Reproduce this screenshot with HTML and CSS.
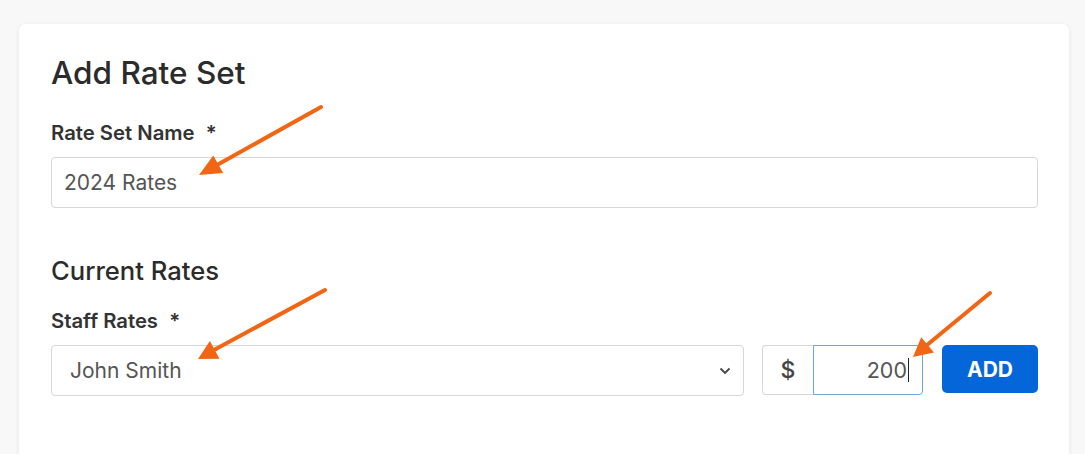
FILE: index.html
```html
<!DOCTYPE html>
<html>
<head>
<link rel="stylesheet" href="styles.css">
</head>
<body>

<div class="card">
  <h1 class="title">Add Rate Set</h1>

  <div class="field">
    <label class="label">Rate Set Name <span class="req">*</span></label>
    <div class="input">2024 Rates</div>
  </div>

  <h2 class="subtitle">Current Rates</h2>

  <div class="field">
    <label class="label">Staff Rates <span class="req">*</span></label>
    <div class="row">
      <div class="select">
        <span>John Smith</span>
        <svg class="chevron" width="12" height="8" viewBox="0 0 12 8"><path d="M1.5 1.5 L6 6 L10.5 1.5" fill="none" stroke="#444" stroke-width="1.8"/></svg>
      </div>
      <div class="money">
        <span class="prefix">$</span>
        <span class="amount">200<span class="caret"></span></span>
      </div>
      <button class="add">ADD</button>
    </div>
  </div>
</div>

<svg class="arrows" width="1085" height="454" viewBox="0 0 1085 454">
  <g stroke="#f26513" stroke-width="4" stroke-linecap="round" fill="#f26513">
    <line x1="321" y1="107" x2="217" y2="165"/>
    <polygon stroke="none" points="199,175 223.1,173 213.3,155.6"/>
    <line x1="325" y1="290" x2="214" y2="350"/>
    <polygon stroke="none" points="198,359 219.5,358.7 209.9,341.1"/>
    <line x1="990" y1="293" x2="927" y2="345"/>
    <polygon stroke="none" points="913,357 934,352.6 921.2,337.2"/>
  </g>
</svg>

</body>
</html>
```

FILE: styles.css
```css
body {
	margin: 0;
	background-color: #f8f8f8;
	font-family: Inter, "Open Sans", Arial, sans-serif;
	color: #333333;
	overflow: hidden;
}

.card {
	margin: 24px 16px 0 19px;
	padding: 29px 31px 80px 32px;
	background-color: #ffffff;
	border-radius: 7px;
	box-shadow: 0 1px 4px rgba(0, 0, 0, 0.08);
}

.title {
	margin: 0 0 27px 0;
	font-size: 31.5px;
	font-weight: 500;
	line-height: 40px;
	color: #2b2b2b;
}

.subtitle {
	margin: 47px 0 21px 0;
	font-size: 25.6px;
	font-weight: 500;
	line-height: 32px;
	color: #2b2b2b;
}

.label {
	display: block;
	font-size: 20.3px;
	font-weight: 600;
	line-height: 26px;
	margin-bottom: 11px;
	color: #333333;
}

.req {
	margin-left: 6px;
}

.input {
	height: 49px;
	border: 1px solid #d6d6d6;
	border-radius: 4px;
	padding: 0 12px;
	display: flex;
	align-items: center;
	font-size: 21px;
	color: #555555;
}

.row {
	display: flex;
	align-items: flex-start;
}

.select {
	width: 661px;
	height: 49px;
	border: 1px solid #d6d6d6;
	border-radius: 4px;
	padding: 0 12px 0 18px;
	display: flex;
	align-items: center;
	justify-content: space-between;
	font-size: 21px;
	color: #555555;
}

.money {
	display: flex;
	margin-left: 18px;
	height: 50px;
}

.prefix {
	width: 50px;
	border: 1px solid #d6d6d6;
	border-right: none;
	border-radius: 4px 0 0 4px;
	display: flex;
	align-items: center;
	justify-content: center;
	font-size: 23px;
	font-weight: 500;
	color: #444444;
}

.amount {
	width: 95px;
	border: 1px solid #6aa6e0;
	border-radius: 0 4px 4px 0;
	padding-right: 13px;
	display: flex;
	align-items: center;
	justify-content: flex-end;
	font-size: 21.5px;
	color: #555555;
}

.caret {
	display: inline-block;
	width: 1px;
	height: 24px;
	margin-left: 1px;
	background-color: #222222;
}

.add {
	margin-left: 19px;
	width: 96px;
	height: 48px;
	border: none;
	border-radius: 5px;
	background-color: #0466d9;
	color: #ffffff;
	font-family: Inter, "Open Sans", Arial, sans-serif;
	font-size: 21px;
	font-weight: 700;
}

.arrows {
	position: absolute;
	top: 0;
	left: 0;
	pointer-events: none;
}
```
